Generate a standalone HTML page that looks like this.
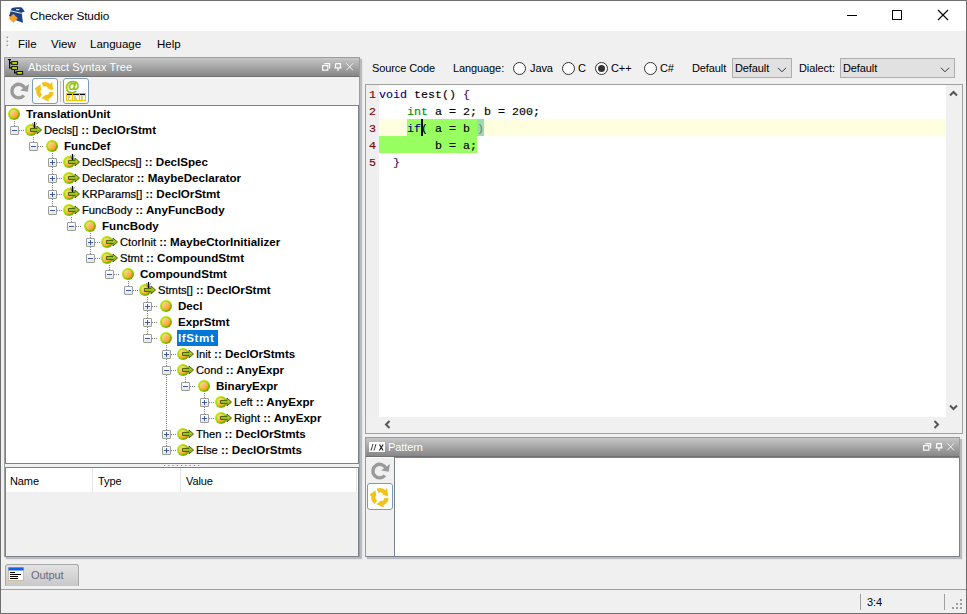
<!DOCTYPE html>
<html><head><meta charset="utf-8"><title>Checker Studio</title>
<style>
*{margin:0;padding:0;box-sizing:border-box}
html,body{width:967px;height:614px;overflow:hidden;background:#f0f0f0;font-family:"Liberation Sans",sans-serif;}
.a{position:absolute}
#win{position:absolute;left:0;top:0;width:967px;height:614px;background:#f0f0f0;overflow:hidden}
.t{position:absolute;white-space:pre;color:#000}
.ui{font-size:11.5px;line-height:14px}
.ui2{font-size:11px;line-height:14px;letter-spacing:-0.1px}
/* tree */
.lines{position:absolute;left:0;top:0}
.tl{position:absolute;white-space:pre;font-size:11.2px;line-height:16px;color:#000;letter-spacing:0px;-webkit-text-stroke:0.2px #000}
.tl b{font-weight:bold;font-size:11.6px;-webkit-text-stroke:0}
.tl.b{font-weight:bold;font-size:11.6px;-webkit-text-stroke:0}
.tl.sel{background:#0078d7;color:#fff;padding:0 0 0 1px;margin-left:-1px;width:41px;height:16px;letter-spacing:0.6px}
.exp{position:absolute;width:9px;height:9px;border:1px solid #9c9c9c;border-radius:1px;background:linear-gradient(#ffffff,#e6e6e6)}
.exp .h{position:absolute;left:1px;top:3px;width:5px;height:1px;background:#3c5aa8}
.exp .v{position:absolute;left:3px;top:1px;width:1px;height:5px;background:#3c5aa8}
.ball{position:absolute;width:12px;height:12px;border-radius:50%;background:radial-gradient(circle at 50% 55%,#ffa64a 0,#ffb45c 35%,#f5c27a 55%,#b7e000 62%,#8ccc00 85%,#6fa800 100%)}
.arr{position:absolute}
.code{font-family:"Liberation Mono",monospace;font-size:11.67px;line-height:17px;color:#000;white-space:pre;-webkit-text-stroke:0.15px currentColor}
.code .ln{color:#800000}

</style></head><body>
<div id="win">
<!-- borders -->
<div class="a" style="left:0;top:0;width:967px;height:1px;background:#6e6e6e"></div>
<div class="a" style="left:0;top:0;width:1px;height:614px;background:#6e6e6e"></div>
<div class="a" style="left:966px;top:0;width:1px;height:614px;background:#6e6e6e"></div>
<div class="a" style="left:0;top:613px;width:967px;height:1px;background:#6e6e6e"></div>
<!-- title bar -->
<div class="a" style="left:1px;top:1px;width:965px;height:30px;background:#fff"></div>
<svg class="a" style="left:6px;top:4px" width="24" height="22" viewBox="0 0 24 22">
 <path d="M5.6 4.2 C8 3.4 12 3 15.8 3.4 L18.8 7.6 L15.8 8.6 L16.2 13 L17 18.8 L10.6 16.6 L3 12 L4.4 8 Z" fill="#1c4283"/>
 <path d="M5 6.9 L15.6 9.4" stroke="#fff" stroke-width="0.9"/>
 <path d="M9.8 5.2 L13.6 5 L12.8 6.3 L10.6 6.2 Z" fill="#fff"/>
 <path d="M7.3 10 L11.6 14.3 L7.3 18.6 L3 14.3 Z" fill="#ffa020" stroke="#f79018" stroke-width="0.5"/>
</svg>
<div class="t ui" style="left:30px;top:8.5px;font-size:11.8px;letter-spacing:-0.1px">Checker Studio</div>
<div class="a" style="left:847px;top:15px;width:10px;height:1px;background:#000"></div>
<div class="a" style="left:892px;top:10px;width:10px;height:10px;border:1px solid #000"></div>
<svg class="a" style="left:937px;top:9px" width="12" height="12" viewBox="0 0 12 12"><path d="M1 1L11 11M11 1L1 11" stroke="#000" stroke-width="1.1"/></svg>
<!-- menu -->
<svg class="a" style="left:5px;top:35px" width="6" height="14" viewBox="0 0 6 14"><g fill="#fff"><rect x="2.5" y="2.5" width="2" height="2"/><rect x="2.5" y="6.5" width="2" height="2"/><rect x="2.5" y="10.5" width="2" height="2"/></g><g fill="#9a9a9a"><rect x="1.6" y="1.6" width="1.6" height="1.6"/><rect x="1.6" y="5.6" width="1.6" height="1.6"/><rect x="1.6" y="9.6" width="1.6" height="1.6"/></g></svg>
<div class="t ui" style="left:18px;top:37px">File</div>
<div class="t ui" style="left:51px;top:37px">View</div>
<div class="t ui" style="left:90px;top:37px">Language</div>
<div class="t ui" style="left:157px;top:37px">Help</div>

<!-- AST panel -->
<div class="a" style="left:4px;top:57px;width:356px;height:500px;border:1px solid #a0a0a0;background:#f0f0f0;box-shadow:2px 2px 1px rgba(0,0,0,.22)"></div>
<div class="a" style="left:4px;top:57px;width:356px;height:20px;background:linear-gradient(#c6c6c6,#868686);border:1px solid #9c9c9c;border-bottom:1px solid #727272"></div>
<svg class="a" style="left:4px;top:56px" width="24" height="22" viewBox="0 0 24 22">
 <path d="M3.9 3.6H7M5.6 3.6V11.9H7.2M5.6 6.9H7.2M10.6 13.6V16.8H12.4" stroke="#000" stroke-width="1.2" fill="none"/>
 <rect x="7.7" y="5.7" width="5.8" height="2.6" fill="#e0ff00" stroke="#000" stroke-width="1"/>
 <rect x="7.7" y="10.7" width="5.8" height="2.6" fill="#e0ff00" stroke="#000" stroke-width="1"/>
 <rect x="12.8" y="15.6" width="5.8" height="2.6" fill="#e0ff00" stroke="#000" stroke-width="1"/>
</svg>
<div class="t ui2" style="left:28px;top:60px;color:#fff;letter-spacing:0.1px">Abstract Syntax Tree</div>
<svg class="a" style="left:319px;top:61px" width="36" height="11" viewBox="0 0 36 11"><g stroke="#fafafa" stroke-width="1.2" fill="none">
 <rect x="3.6" y="4.6" width="5.2" height="4.6"/><path d="M5.2 2.6H10.6V7.4"/>
 <path d="M16.6 2.6H21.4V6.8M16.6 2.6V6.8M15.4 6.8H22.6M19 6.8V10"/>
 </g><path d="M27.3 2.3L34 9.3M34 2.3L27.3 9.3" stroke="#fafafa" stroke-width="0.9"/></svg>
<!-- toolbar -->
<div class="a" style="left:5px;top:77px;width:354px;height:28px;background:#f2f2f2"></div>
<svg class="a" style="left:6px;top:78px" width="26" height="26"><use href="#refr"/></svg>
<div class="a" style="left:32px;top:78px;width:26px;height:26px;border:1px solid #7e9cb8;border-radius:3px;background:#fff"></div>
<svg class="a" style="left:35px;top:81px" width="20" height="20"><use href="#pin"/></svg>
<div class="a" style="left:60px;top:81px;width:1px;height:21px;background:#c8c8c8"></div>
<div class="a" style="left:63px;top:78px;width:26px;height:26px;border:1px solid #7e9cb8;border-radius:3px;background:#fff"></div>
<svg class="a" style="left:64px;top:79px" width="24" height="24" viewBox="0 0 24 24">
 <text x="1.2" y="12.2" font-family="Liberation Sans" font-size="14.5" font-weight="bold" fill="#8cc000" stroke="#8cc000" stroke-width="0.4">@</text>
 <rect x="2.5" y="14.5" width="19" height="7" fill="#fff6d8" stroke="#ffc400" stroke-width="1"/>
 <path d="M3 15.5H21" stroke="#000" stroke-width="1.2"/>
 <path d="M8.5 15V22M15.5 15V22" stroke="#ffc400" stroke-width="1"/>
 <path d="M4 18H6M4 20H5M10 18H12M10 20H13M17 18H19M17 20H19" stroke="#8a8a70" stroke-width="0.8"/>
</svg>
<!-- tree box -->
<div class="a" style="left:5px;top:105px;width:354px;height:359px;background:#fff;border:1px solid #7b818c"></div>
<svg class="lines" width="967" height="614"><g stroke="#808080" stroke-width="1" stroke-dasharray="1 1" fill="none"><path d="M15 130.5H25"/><path d="M34 146.5H44"/><path d="M53 162.5H63"/><path d="M53 178.5H63"/><path d="M53 194.5H63"/><path d="M53 210.5H63"/><path d="M72 226.5H82"/><path d="M91 242.5H101"/><path d="M91 258.5H101"/><path d="M110 274.5H120"/><path d="M129 290.5H139"/><path d="M148 306.5H158"/><path d="M148 322.5H158"/><path d="M148 338.5H158"/><path d="M167 354.5H177"/><path d="M167 370.5H177"/><path d="M186 386.5H196"/><path d="M205 402.5H215"/><path d="M205 418.5H215"/><path d="M167 434.5H177"/><path d="M167 450.5H177"/><path d="M14.5 121V130"/><path d="M33.5 137V146"/><path d="M52.5 153V210"/><path d="M71.5 217V226"/><path d="M90.5 233V258"/><path d="M109.5 265V274"/><path d="M128.5 281V290"/><path d="M147.5 297V338"/><path d="M166.5 345V450"/><path d="M185.5 377V386"/><path d="M204.5 393V418"/></g></svg><svg class="arr" style="left:8px;top:108px" width="12" height="12"><use href="#ball"/></svg><div class="tl b" style="left:26px;top:106px">TranslationUnit</div><div class="exp" style="left:10px;top:126px"><i class="h"></i></div><svg class="arr" style="left:25px;top:124px" width="17" height="12"><use href="#ball"/><use href="#arrow"/></svg><svg class="arr" style="left:31px;top:122px" width="7" height="7" viewBox="0 0 7 7"><path d="M3.5 0V6" stroke="#000" stroke-width="1.3"/><path d="M1 1.5L6 5M6 1.5L1 5" stroke="#333" stroke-width="0.8" stroke-dasharray="1 1"/></svg><div class="tl" style="left:44px;top:122px">Decls[] <b>:: DeclOrStmt</b></div><div class="exp" style="left:29px;top:142px"><i class="h"></i></div><svg class="arr" style="left:46px;top:140px" width="12" height="12"><use href="#ball"/></svg><div class="tl b" style="left:64px;top:138px">FuncDef</div><div class="exp" style="left:48px;top:158px"><i class="h"></i><i class="v"></i></div><svg class="arr" style="left:63px;top:156px" width="17" height="12"><use href="#ball"/><use href="#arrow"/></svg><svg class="arr" style="left:69px;top:154px" width="7" height="7" viewBox="0 0 7 7"><path d="M3.5 0V6" stroke="#000" stroke-width="1.3"/><path d="M1 1.5L6 5M6 1.5L1 5" stroke="#333" stroke-width="0.8" stroke-dasharray="1 1"/></svg><div class="tl" style="left:82px;top:154px">DeclSpecs[] <b>:: DeclSpec</b></div><div class="exp" style="left:48px;top:174px"><i class="h"></i><i class="v"></i></div><svg class="arr" style="left:63px;top:172px" width="17" height="12"><use href="#ball"/><use href="#arrow"/></svg><div class="tl" style="left:82px;top:170px">Declarator <b>:: MaybeDeclarator</b></div><div class="exp" style="left:48px;top:190px"><i class="h"></i><i class="v"></i></div><svg class="arr" style="left:63px;top:188px" width="17" height="12"><use href="#ball"/><use href="#arrow"/></svg><svg class="arr" style="left:69px;top:186px" width="7" height="7" viewBox="0 0 7 7"><path d="M3.5 0V6" stroke="#000" stroke-width="1.3"/><path d="M1 1.5L6 5M6 1.5L1 5" stroke="#333" stroke-width="0.8" stroke-dasharray="1 1"/></svg><div class="tl" style="left:82px;top:186px">KRParams[] <b>:: DeclOrStmt</b></div><div class="exp" style="left:48px;top:206px"><i class="h"></i></div><svg class="arr" style="left:63px;top:204px" width="17" height="12"><use href="#ball"/><use href="#arrow"/></svg><div class="tl" style="left:82px;top:202px">FuncBody <b>:: AnyFuncBody</b></div><div class="exp" style="left:67px;top:222px"><i class="h"></i></div><svg class="arr" style="left:84px;top:220px" width="12" height="12"><use href="#ball"/></svg><div class="tl b" style="left:102px;top:218px">FuncBody</div><div class="exp" style="left:86px;top:238px"><i class="h"></i><i class="v"></i></div><svg class="arr" style="left:101px;top:236px" width="17" height="12"><use href="#ball"/><use href="#arrow"/></svg><div class="tl" style="left:120px;top:234px">CtorInit <b>:: MaybeCtorInitializer</b></div><div class="exp" style="left:86px;top:254px"><i class="h"></i></div><svg class="arr" style="left:101px;top:252px" width="17" height="12"><use href="#ball"/><use href="#arrow"/></svg><div class="tl" style="left:120px;top:250px">Stmt <b>:: CompoundStmt</b></div><div class="exp" style="left:105px;top:270px"><i class="h"></i></div><svg class="arr" style="left:122px;top:268px" width="12" height="12"><use href="#ball"/></svg><div class="tl b" style="left:140px;top:266px">CompoundStmt</div><div class="exp" style="left:124px;top:286px"><i class="h"></i></div><svg class="arr" style="left:139px;top:284px" width="17" height="12"><use href="#ball"/><use href="#arrow"/></svg><svg class="arr" style="left:145px;top:282px" width="7" height="7" viewBox="0 0 7 7"><path d="M3.5 0V6" stroke="#000" stroke-width="1.3"/><path d="M1 1.5L6 5M6 1.5L1 5" stroke="#333" stroke-width="0.8" stroke-dasharray="1 1"/></svg><div class="tl" style="left:158px;top:282px">Stmts[] <b>:: DeclOrStmt</b></div><div class="exp" style="left:143px;top:302px"><i class="h"></i><i class="v"></i></div><svg class="arr" style="left:160px;top:300px" width="12" height="12"><use href="#ball"/></svg><div class="tl b" style="left:178px;top:298px">Decl</div><div class="exp" style="left:143px;top:318px"><i class="h"></i><i class="v"></i></div><svg class="arr" style="left:160px;top:316px" width="12" height="12"><use href="#ball"/></svg><div class="tl b" style="left:178px;top:314px">ExprStmt</div><div class="exp" style="left:143px;top:334px"><i class="h"></i></div><svg class="arr" style="left:160px;top:332px" width="12" height="12"><use href="#ball"/></svg><div class="tl b sel" style="left:178px;top:330px">IfStmt</div><div class="exp" style="left:162px;top:350px"><i class="h"></i><i class="v"></i></div><svg class="arr" style="left:177px;top:348px" width="17" height="12"><use href="#ball"/><use href="#arrow"/></svg><div class="tl" style="left:196px;top:346px">Init <b>:: DeclOrStmts</b></div><div class="exp" style="left:162px;top:366px"><i class="h"></i></div><svg class="arr" style="left:177px;top:364px" width="17" height="12"><use href="#ball"/><use href="#arrow"/></svg><div class="tl" style="left:196px;top:362px">Cond <b>:: AnyExpr</b></div><div class="exp" style="left:181px;top:382px"><i class="h"></i></div><svg class="arr" style="left:198px;top:380px" width="12" height="12"><use href="#ball"/></svg><div class="tl b" style="left:216px;top:378px">BinaryExpr</div><div class="exp" style="left:200px;top:398px"><i class="h"></i><i class="v"></i></div><svg class="arr" style="left:215px;top:396px" width="17" height="12"><use href="#ball"/><use href="#arrow"/></svg><div class="tl" style="left:234px;top:394px">Left <b>:: AnyExpr</b></div><div class="exp" style="left:200px;top:414px"><i class="h"></i><i class="v"></i></div><svg class="arr" style="left:215px;top:412px" width="17" height="12"><use href="#ball"/><use href="#arrow"/></svg><div class="tl" style="left:234px;top:410px">Right <b>:: AnyExpr</b></div><div class="exp" style="left:162px;top:430px"><i class="h"></i><i class="v"></i></div><svg class="arr" style="left:177px;top:428px" width="17" height="12"><use href="#ball"/><use href="#arrow"/></svg><div class="tl" style="left:196px;top:426px">Then <b>:: DeclOrStmts</b></div><div class="exp" style="left:162px;top:446px"><i class="h"></i><i class="v"></i></div><svg class="arr" style="left:177px;top:444px" width="17" height="12"><use href="#ball"/><use href="#arrow"/></svg><div class="tl" style="left:196px;top:442px">Else <b>:: DeclOrStmts</b></div>
<!-- splitter dots -->
<svg class="a" style="left:164px;top:465px" width="38" height="2" viewBox="0 0 38 2"><rect x="0.00" y="0" width="1.2" height="1" fill="#8a8a8a"/><rect x="1.00" y="1" width="1" height="1" fill="#fff"/><rect x="4.25" y="0" width="1.2" height="1" fill="#8a8a8a"/><rect x="5.25" y="1" width="1" height="1" fill="#fff"/><rect x="8.50" y="0" width="1.2" height="1" fill="#8a8a8a"/><rect x="9.50" y="1" width="1" height="1" fill="#fff"/><rect x="12.75" y="0" width="1.2" height="1" fill="#8a8a8a"/><rect x="13.75" y="1" width="1" height="1" fill="#fff"/><rect x="17.00" y="0" width="1.2" height="1" fill="#8a8a8a"/><rect x="18.00" y="1" width="1" height="1" fill="#fff"/><rect x="21.25" y="0" width="1.2" height="1" fill="#8a8a8a"/><rect x="22.25" y="1" width="1" height="1" fill="#fff"/><rect x="25.50" y="0" width="1.2" height="1" fill="#8a8a8a"/><rect x="26.50" y="1" width="1" height="1" fill="#fff"/><rect x="29.75" y="0" width="1.2" height="1" fill="#8a8a8a"/><rect x="30.75" y="1" width="1" height="1" fill="#fff"/><rect x="34.00" y="0" width="1.2" height="1" fill="#8a8a8a"/><rect x="35.00" y="1" width="1" height="1" fill="#fff"/></svg>
<!-- properties -->
<div class="a" style="left:5px;top:467px;width:354px;height:90px;border:1px solid #7b818c;background:#f0f0f0"></div>
<div class="a" style="left:6px;top:468px;width:352px;height:24px;background:#fff"></div>
<div class="a" style="left:92px;top:468px;width:1px;height:24px;background:#e5e5e5"></div>
<div class="a" style="left:180px;top:468px;width:1px;height:24px;background:#e5e5e5"></div>
<div class="a" style="left:356px;top:468px;width:1px;height:24px;background:#e5e5e5"></div>
<div class="t ui2" style="left:10px;top:474px">Name</div>
<div class="t ui2" style="left:98px;top:474px">Type</div>
<div class="t ui2" style="left:186px;top:474px">Value</div>

<!-- right toolbar -->
<div class="t ui2" style="left:372px;top:61px">Source Code</div>
<div class="t ui2" style="left:453px;top:61px">Language:</div>
<div class="a" style="left:513px;top:62px;width:13px;height:13px;border:1px solid #333;border-radius:50%;background:#fff"></div>
<div class="t ui2" style="left:530px;top:61px">Java</div>
<div class="a" style="left:562px;top:62px;width:13px;height:13px;border:1px solid #333;border-radius:50%;background:#fff"></div>
<div class="t ui2" style="left:578px;top:61px">C</div>
<div class="a" style="left:595px;top:62px;width:13px;height:13px;border:1px solid #333;border-radius:50%;background:#fff"></div>
<div class="a" style="left:598px;top:65px;width:7px;height:7px;border-radius:50%;background:#333"></div>
<div class="t ui2" style="left:611px;top:61px">C++</div>
<div class="a" style="left:644px;top:62px;width:13px;height:13px;border:1px solid #333;border-radius:50%;background:#fff"></div>
<div class="t ui2" style="left:660px;top:61px">C#</div>
<div class="t ui2" style="left:692px;top:61px">Default</div>
<div class="a" style="left:732px;top:58px;width:60px;height:20px;border:1px solid #adadad;background:#e1e1e1"></div>
<div class="t ui2" style="left:735px;top:61px">Default</div>
<svg class="a" style="left:777px;top:67px" width="10" height="6" viewBox="0 0 10 6"><path d="M1 0.8L5 4.8L9 0.8" stroke="#333" fill="none"/></svg>
<div class="t ui2" style="left:799px;top:61px">Dialect:</div>
<div class="a" style="left:840px;top:58px;width:115px;height:20px;border:1px solid #adadad;background:#e1e1e1"></div>
<div class="t ui2" style="left:843px;top:61px">Default</div>
<svg class="a" style="left:940px;top:67px" width="10" height="6" viewBox="0 0 10 6"><path d="M1 0.8L5 4.8L9 0.8" stroke="#333" fill="none"/></svg>

<!-- editor -->
<div class="a" style="left:365px;top:84px;width:598px;height:350px;border:1px solid #a0a0a0;background:#f0f0f0"></div>
<div class="a" style="left:366px;top:85px;width:580px;height:332px;background:#fff"></div>
<div class="a" style="left:366px;top:85px;width:13px;height:332px;background:#efefef"></div>
<div class="a" style="left:379px;top:119px;width:567px;height:17px;background:#ffffe0"></div>
<div class="a" style="left:407px;top:119px;width:70px;height:17px;background:#98ff60"></div>
<div class="a" style="left:477px;top:119px;width:7px;height:17px;background:#98dfb0"></div>
<div class="a" style="left:379px;top:136px;width:98px;height:17px;background:#98ff60"></div>
<div class="a" style="left:421px;top:119px;width:2px;height:17px;background:#000"></div>
<div class="a code" style="left:369px;top:87px"><span class="ln">1
2
3
4
5</span></div>
<div class="a code" style="left:379px;top:87px"><span style="color:#000080">void</span> test() <span style="color:#401050">{</span>
    <span style="color:#009000">int</span> a = 2; b = 200;
    <span style="color:#000080">if</span>( a = b <span style="color:#808080">)</span>
        b = a;
  <span style="color:#401050">}</span></div>
<svg class="a" style="left:949px;top:90px" width="9" height="7" viewBox="0 0 9 7"><path d="M1 5.5L4.5 2L8 5.5" stroke="#555" stroke-width="2" fill="none"/></svg>
<svg class="a" style="left:949px;top:404px" width="9" height="7" viewBox="0 0 9 7"><path d="M1 1.5L4.5 5L8 1.5" stroke="#555" stroke-width="2" fill="none"/></svg>
<svg class="a" style="left:384px;top:420px" width="7" height="9" viewBox="0 0 7 9"><path d="M5.5 1L2 4.5L5.5 8" stroke="#555" stroke-width="2" fill="none"/></svg>
<svg class="a" style="left:933px;top:420px" width="7" height="9" viewBox="0 0 7 9"><path d="M1.5 1L5 4.5L1.5 8" stroke="#555" stroke-width="2" fill="none"/></svg>

<!-- pattern panel -->
<div class="a" style="left:365px;top:437px;width:595px;height:120px;border:1px solid #9a9a9a;border-right-color:#7b818c;border-bottom-color:#7b818c;background:#f0f0f0;box-shadow:2px 2px 1px rgba(0,0,0,.22)"></div>
<div class="a" style="left:365px;top:437px;width:595px;height:20px;background:linear-gradient(#c6c6c6,#868686);border:1px solid #9c9c9c;border-bottom:1px solid #727272"></div>
<svg class="a" style="left:369px;top:442px" width="16" height="10" viewBox="0 0 16 10"><rect width="16" height="10" fill="#fff"/><path d="M4 2L2 8.5M7 2L5 8.5" stroke="#222" stroke-width="0.9"/><path d="M10.5 2.5L14 8.5M14.2 2.5L10.3 8.5" stroke="#111" stroke-width="1.1"/></svg>
<div class="t ui2" style="left:388px;top:440px;color:#fff">Pattern</div>
<svg class="a" style="left:920px;top:441px" width="36" height="11" viewBox="0 0 36 11"><g stroke="#fafafa" stroke-width="1.2" fill="none">
 <rect x="3.6" y="4.6" width="5.2" height="4.6"/><path d="M5.2 2.6H10.6V7.4"/>
 <path d="M16.6 2.6H21.4V6.8M16.6 2.6V6.8M15.4 6.8H22.6M19 6.8V10"/>
 </g><path d="M27.3 2.3L34 9.3M34 2.3L27.3 9.3" stroke="#fafafa" stroke-width="0.9"/></svg>
<div class="a" style="left:394px;top:457px;width:565px;height:99px;background:#fff;border-left:1px solid #7b818c;border-top:1px solid #7b818c"></div><div class="a" style="left:366px;top:457px;width:28px;height:1px;background:#fafafa"></div>
<svg class="a" style="left:367px;top:458px" width="26" height="26"><use href="#refr"/></svg>
<div class="a" style="left:367px;top:483px;width:26px;height:27px;border:1px solid #7e9cb8;border-radius:3px;background:#fff"></div>
<svg class="a" style="left:370px;top:487px" width="20" height="20"><use href="#pin"/></svg>

<!-- output tab -->
<div class="a" style="left:5px;top:564px;width:74px;height:22px;border:1px solid #a8a8a8;border-bottom:0;border-radius:3px 3px 0 0;background:linear-gradient(#e2e2e2,#c8c8c8)"></div>
<svg class="a" style="left:8px;top:567px" width="16" height="14" viewBox="0 0 16 14">
 <rect x="0.5" y="0.5" width="15" height="13" fill="#fff" stroke="#d0bca0"/>
 <rect x="0.5" y="0.5" width="15" height="3" fill="#1060e0"/>
 <path d="M2 5.5H7M2 7.5H13M2 9.5H10M2 11.5H10" stroke="#000" stroke-width="1"/>
</svg>
<div class="t ui2" style="left:31px;top:568px;color:#6a6a80">Output</div>
<!-- status bar -->
<div class="a" style="left:1px;top:589px;width:965px;height:1px;background:#a0a0a0"></div>
<div class="a" style="left:860px;top:594px;width:1px;height:16px;background:#a0a0a0"></div>
<div class="a" style="left:944px;top:594px;width:1px;height:16px;background:#a0a0a0"></div>
<div class="t ui2" style="left:867px;top:595px">3:4</div>
<svg class="a" style="left:951px;top:598px" width="12" height="12" viewBox="0 0 12 12"><g fill="#a0a0a0"><rect x="9" y="1" width="2" height="2"/><rect x="5" y="5" width="2" height="2"/><rect x="9" y="5" width="2" height="2"/><rect x="1" y="9" width="2" height="2"/><rect x="5" y="9" width="2" height="2"/><rect x="9" y="9" width="2" height="2"/></g></svg>
</div>
<svg width="0" height="0" style="position:absolute"><defs>
<linearGradient id="ag" x1="0" y1="0" x2="0" y2="1"><stop offset="0" stop-color="#c4e030"/><stop offset="1" stop-color="#809c00"/></linearGradient>
<linearGradient id="ring" x1="0" y1="0" x2="1" y2="1"><stop offset="0" stop-color="#c4fa00"/><stop offset="0.5" stop-color="#9ad400"/><stop offset="1" stop-color="#6a8a00"/></linearGradient>
<linearGradient id="org" x1="0" y1="0" x2="1" y2="1"><stop offset="0" stop-color="#ffdca8"/><stop offset="1" stop-color="#ff9410"/></linearGradient>
<symbol id="pin" viewBox="0 0 20 20"><g fill="#f2c21a"><path d="M6.70 1.84 A8.8 8.8 0 0 1 15.42 3.07 L17.14 0.86 L18.18 9.43 L12.22 7.16 L12.83 6.38 A4.6 4.6 0 0 0 8.28 5.73 Z"/><path d="M6.70 1.84 A8.8 8.8 0 0 1 15.42 3.07 L17.14 0.86 L18.18 9.43 L12.22 7.16 L12.83 6.38 A4.6 4.6 0 0 0 8.28 5.73 Z" transform="rotate(120 10 10)"/><path d="M6.70 1.84 A8.8 8.8 0 0 1 15.42 3.07 L17.14 0.86 L18.18 9.43 L12.22 7.16 L12.83 6.38 A4.6 4.6 0 0 0 8.28 5.73 Z" transform="rotate(240 10 10)"/></g></symbol>
<symbol id="refr" viewBox="0 0 26 26"><path d="M17.9 17.5 A6.8 6.8 0 1 1 18.9 10.2" stroke="#9a9a9a" stroke-width="3.4" fill="none"/><path d="M22.9 5.9L21.8 13.8L14.2 12.5Z" fill="#9a9a9a"/></symbol>
<symbol id="ball"><circle cx="6" cy="6" r="6" fill="url(#ring)"/><circle cx="6" cy="6" r="3.9" fill="url(#org)"/></symbol>
<symbol id="arrow"><path d="M5.5 4.5H12V2L16.5 6L12 10V7.5H5.5Z" fill="url(#ag)" stroke="#4a6a00" stroke-width="1"/></symbol>
</defs></svg>

</body></html>
